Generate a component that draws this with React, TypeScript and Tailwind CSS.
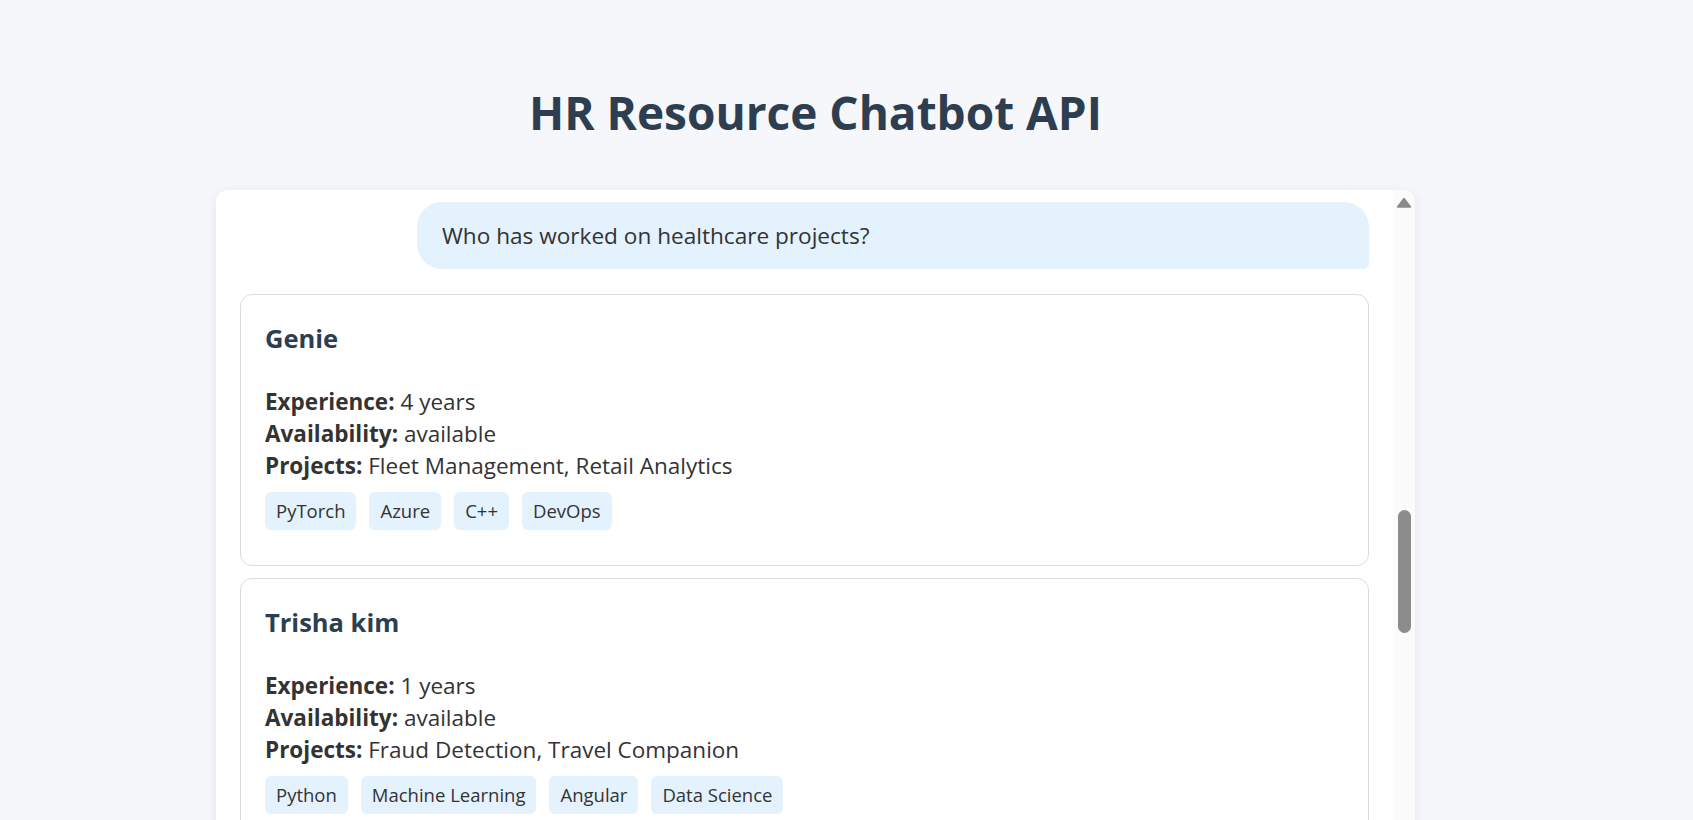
const candidates = [
  {
    name: "Genie",
    experience: "4 years",
    availability: "available",
    projects: "Fleet Management, Retail Analytics",
    skills: ["PyTorch", "Azure", "C++", "DevOps"],
  },
  {
    name: "Trisha kim",
    experience: "1 years",
    availability: "available",
    projects: "Fraud Detection, Travel Companion",
    skills: ["Python", "Machine Learning", "Angular", "Data Science"],
  },
];

type Candidate = (typeof candidates)[number];

function CandidateCard({ c }: { c: Candidate }) {
  return (
    <div className="mb-3 rounded-xl border border-[#dcdcdc] bg-white px-6 pt-[25px] pb-[35px]">
      <h3 className="text-[25.5px] leading-[36px] font-bold text-[#2c3e50]">{c.name}</h3>
      <div className="mt-[30px] text-[22.5px] leading-[32px] text-[#333]">
        <p>
          <strong>Experience:</strong> {c.experience}
        </p>
        <p>
          <strong>Availability:</strong> {c.availability}
        </p>
        <p>
          <strong>Projects:</strong> {c.projects}
        </p>
      </div>
      <div className="mt-[10px] flex flex-wrap gap-[13px]">
        {c.skills.map((s) => (
          <span
            key={s}
            className="rounded-md bg-[#e3f2fd] px-[11px] py-[5px] text-[18.5px] leading-[28px] text-[#333]"
          >
            {s}
          </span>
        ))}
      </div>
    </div>
  );
}

export default function App() {
  return (
    <div className="h-[820px] overflow-hidden bg-[#f5f7fa] font-['Open_Sans',sans-serif]">
      <div className="ml-[216px] w-[1199px] pt-[89px]">
        <h1 className="text-center text-[46px] leading-none font-bold text-[#2c3e50]">
          HR Resource Chatbot API
        </h1>

        {/* Chat window */}
        <div className="mt-[55px] flex h-[700px] overflow-hidden rounded-xl bg-white shadow-[0_2px_12px_rgba(0,0,0,0.08)]">
          <div className="flex-1 px-6 pt-3">
            <div className="mb-[25px] ml-auto w-[952px] rounded-[25px] rounded-br-[5px] bg-[#e3f2fd] px-[25px] pt-[16px] pb-[16px] text-[22.6px] leading-[35px] text-[#333]">
              Who has worked on healthcare projects?
            </div>
            {candidates.map((c) => (
              <CandidateCard key={c.name} c={c} />
            ))}
          </div>

          {/* Scrollbar */}
          <div className="flex w-[22px] flex-col items-center bg-[#fbfbfb]">
            <svg width="16" height="11" viewBox="0 0 16 11" className="mt-[7px]">
              <path d="M8 1.5 L14.5 10 L1.5 10 Z" fill="#8a8a8a" stroke="#8a8a8a" strokeWidth="1.5" strokeLinejoin="round" />
            </svg>
            <div className="mt-[302px] h-[123px] w-[13px] rounded-full bg-[#8c8c8c]" />
          </div>
        </div>
      </div>
    </div>
  );
}
